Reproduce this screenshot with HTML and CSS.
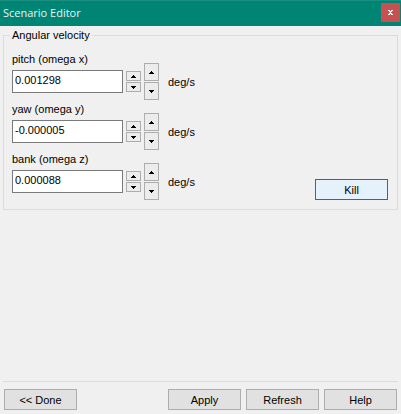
FILE: index.html
```html
<!DOCTYPE html>
<html lang="en">
<head>
<meta charset="utf-8">
<title>Scenario Editor</title>
<link rel="stylesheet" href="styles.css">
</head>
<body>
<svg class="defs" aria-hidden="true">
  <symbol id="up" viewBox="0 0 5 3"><path d="M2 0h1v1h1v1h1v1H0V2h1V1h1z"/></symbol>
  <symbol id="down" viewBox="0 0 5 3"><path d="M0 0h5v1H4v1H3v1H2V2H1V1H0z"/></symbol>
</svg>
<div class="window">
  <header class="titlebar">
    <h1 class="title">Scenario Editor</h1>
    <button class="close" type="button" aria-label="Close">
      <svg viewBox="0 0 5 5"><path d="M0 0h2v1h1V0h2v1H4v1H3v1h1v1h1v1H3V4H2v1H0V4h1V3h1V2H1V1H0z"/></svg>
    </button>
  </header>
  <form class="editor">
    <fieldset class="group">
      <legend class="legend">Angular velocity</legend>
      <div class="fields">
        <div class="field">
          <label class="label" for="pitch">pitch (omega x)</label>
          <input class="value" id="pitch" type="text" value="0.001298">
          <div class="spin">
            <button class="step" type="button" aria-label="Increase pitch"><svg><use href="#up"/></svg></button>
            <button class="step" type="button" aria-label="Decrease pitch"><svg><use href="#down"/></svg></button>
          </div>
          <div class="spin spin-large">
            <button class="step" type="button" aria-label="Increase pitch faster"><svg><use href="#up"/></svg></button>
            <button class="step" type="button" aria-label="Decrease pitch faster"><svg><use href="#down"/></svg></button>
          </div>
          <span class="unit">deg/s</span>
        </div>
        <div class="field">
          <label class="label" for="yaw">yaw (omega y)</label>
          <input class="value" id="yaw" type="text" value="-0.000005">
          <div class="spin">
            <button class="step" type="button" aria-label="Increase yaw"><svg><use href="#up"/></svg></button>
            <button class="step" type="button" aria-label="Decrease yaw"><svg><use href="#down"/></svg></button>
          </div>
          <div class="spin spin-large">
            <button class="step" type="button" aria-label="Increase yaw faster"><svg><use href="#up"/></svg></button>
            <button class="step" type="button" aria-label="Decrease yaw faster"><svg><use href="#down"/></svg></button>
          </div>
          <span class="unit">deg/s</span>
        </div>
        <div class="field">
          <label class="label" for="bank">bank (omega z)</label>
          <input class="value" id="bank" type="text" value="0.000088">
          <div class="spin">
            <button class="step" type="button" aria-label="Increase bank"><svg><use href="#up"/></svg></button>
            <button class="step" type="button" aria-label="Decrease bank"><svg><use href="#down"/></svg></button>
          </div>
          <div class="spin spin-large">
            <button class="step" type="button" aria-label="Increase bank faster"><svg><use href="#up"/></svg></button>
            <button class="step" type="button" aria-label="Decrease bank faster"><svg><use href="#down"/></svg></button>
          </div>
          <span class="unit">deg/s</span>
        </div>
      </div>
      <button class="button button-hot" type="button">Kill</button>
    </fieldset>
    <footer class="footer">
      <button class="button button-done" type="button">&lt;&lt; Done</button>
      <button class="button" type="button">Apply</button>
      <button class="button" type="button">Refresh</button>
      <button class="button" type="button">Help</button>
    </footer>
  </form>
</div>
</body>
</html>
```
FILE: styles.css
```css
* {
  box-sizing: border-box;
}

body {
  margin: 0;
  background: #f0f0f0;
  color: #000;
  font: 11px/14px "Liberation Sans", Arial, sans-serif;
}

button,
input {
  margin: 0;
  font: inherit;
  color: inherit;
  border-radius: 0;
}

svg {
  display: block;
  width: 5px;
  height: 3px;
  shape-rendering: crispEdges;
}

.defs {
  position: absolute;
  width: 0;
  height: 0;
}

.window {
  display: flex;
  flex-direction: column;
  min-height: 100vh;
}

.titlebar {
  display: flex;
  align-items: flex-start;
  justify-content: space-between;
  height: 26px;
  padding: 2px 1px 0 3px;
  border-top: 1px solid #1a8f80;
  background: #008575;
}

.title {
  margin: 0;
  color: #e6f3f1;
  font: 11px/20px "Open Sans", "Noto Sans", sans-serif;
}

.close {
  display: grid;
  place-items: center;
  width: 19px;
  height: 19px;
  padding: 0;
  border: 0;
  background: #c75050;
}

.close svg {
  height: 5px;
  fill: #fff;
}

.editor {
  display: flex;
  flex: 1;
  flex-direction: column;
  justify-content: space-between;
  padding: 3px;
}

.group {
  display: flex;
  align-items: flex-end;
  justify-content: space-between;
  min-width: 0;
  margin: 0;
  padding: 11px 9px 9px 8px;
  border: 1px solid #dcdcdc;
}

.legend {
  margin-left: -2px;
  padding: 0 2px;
  line-height: 12px;
}

.fields {
  display: grid;
  gap: 2px;
}

.field {
  display: grid;
  grid-template: 18px 23px 7px / 111px 15px 15px auto;
  column-gap: 3px;
}

.label {
  grid-area: 1 / 1;
}

.value {
  grid-area: 2 / 1;
  width: 100%;
  padding: 0 2px 4px;
  border: 1px solid #7a7a7a;
  background: #fff;
}

.spin {
  display: grid;
  grid-area: 2 / 2;
  grid-template-rows: 10px 10px;
  align-content: center;
  gap: 1px;
}

.spin-large {
  grid-area: 1 / 3 / 4 / 4;
  grid-template-rows: 18px 18px;
  align-content: end;
}

.step {
  display: grid;
  place-items: center;
  padding: 0;
  border: 1px solid #adadad;
  background: #ececec;
}

.unit {
  grid-area: 2 / 4;
  align-self: center;
  padding-left: 6px;
}

.button {
  width: 73px;
  height: 21px;
  padding: 0;
  border: 1px solid #adadad;
  background: #e1e1e1;
}

.button-hot {
  border-color: #0078d7;
  background: #e5f1fb;
}

.footer {
  display: flex;
  gap: 5px;
  padding: 7px 1px 1px;
  border-top: 1px solid #dcdcdc;
}

.button-done {
  margin-right: auto;
}
```
